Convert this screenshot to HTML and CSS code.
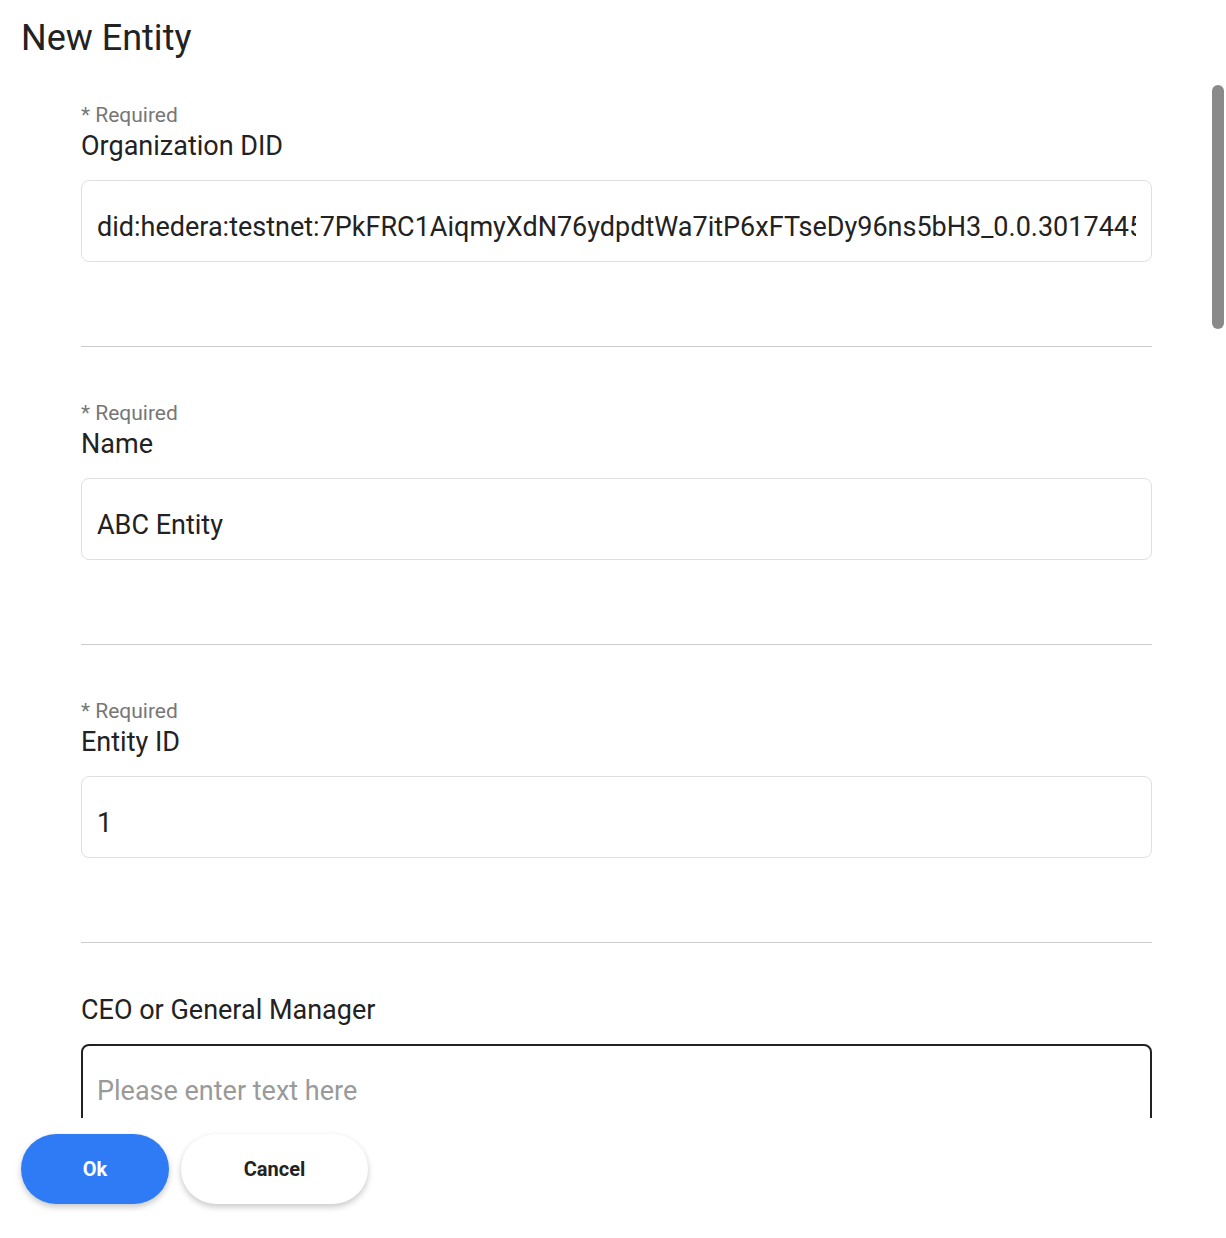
FILE: index.html
```html
<!DOCTYPE html>
<html lang="en">
<head>
<meta charset="utf-8">
<title>New Entity</title>
<link rel="stylesheet" href="styles.css">
</head>
<body>
<div class="dialog">
  <header class="dialog-header">
    <h1 class="dialog-title">New Entity</h1>
  </header>
  <div class="dialog-body">
    <form class="form">
      <div class="field">
        <div class="required">* Required</div>
        <label class="field-label">Organization DID</label>
        <input class="text-input" type="text" value="did:hedera:testnet:7PkFRC1AiqmyXdN76ydpdtWa7itP6xFTseDy96ns5bH3_0.0.3017445">
      </div>
      <div class="field">
        <div class="required">* Required</div>
        <label class="field-label">Name</label>
        <input class="text-input" type="text" value="ABC Entity">
      </div>
      <div class="field">
        <div class="required">* Required</div>
        <label class="field-label">Entity ID</label>
        <input class="text-input" type="text" value="1">
      </div>
      <div class="field field-optional">
        <label class="field-label">CEO or General Manager</label>
        <input class="text-input focused" type="text" placeholder="Please enter text here">
      </div>
    </form>
    <div class="scroll-thumb"></div>
  </div>
  <footer class="dialog-actions">
    <button class="btn btn-primary" type="button">Ok</button>
    <button class="btn btn-secondary" type="button">Cancel</button>
  </footer>
</div>
</body>
</html>
```
FILE: styles.css
```css
* { box-sizing: border-box; }

html, body {
  margin: 0;
  padding: 0;
  background: #ffffff;
}

body {
  font-family: Roboto, "Noto Sans", "Liberation Sans", sans-serif;
  color: #222222;
}

.dialog {
  width: 1226px;
  height: 1238px;
  display: flex;
  flex-direction: column;
}

.dialog-header {
  height: 85px;
  padding: 16px 0 0 21px;
  flex: none;
}

.dialog-title {
  margin: 0;
  font-size: 36px;
  line-height: 44px;
  font-weight: 400;
  color: #222222;
}

.dialog-body {
  position: relative;
  height: 1033px;
  flex: none;
  overflow: hidden;
}

.scroll-thumb {
  position: absolute;
  top: 0;
  right: 2px;
  width: 12px;
  height: 244px;
  background: #8a8a8a;
  border-radius: 6px;
}

.form {
  padding: 0 74px 0 81px;
  display: flex;
  flex-direction: column;
}

.field {
  padding: 16px 0 84px;
  border-bottom: 1px solid #cccccc;
  margin-bottom: 36px;
  display: flex;
  flex-direction: column;
}

.field-optional {
  padding-top: 14px;
}

.required {
  font-size: 21px;
  line-height: 28px;
  color: #777777;
}

.field-label {
  font-size: 27px;
  line-height: 28px;
  margin-top: 3px;
  color: #222222;
}

.text-input {
  margin-top: 20px;
  height: 82px;
  width: 100%;
  border: 1px solid #e0e0e0;
  border-radius: 8px;
  padding: 12px 15px 0 15px;
  font-family: Roboto, "Noto Sans", "Liberation Sans", sans-serif;
  font-size: 27px;
  color: #222222;
  background: #ffffff;
  outline: none;
}

.text-input::placeholder {
  color: #9a9a9a;
}

.text-input.focused {
  border: 2px solid #222222;
  padding: 11px 14px 0 14px;
}

.dialog-actions {
  flex: none;
  display: flex;
  gap: 12px;
  padding: 16px 0 0 21px;
}

.btn {
  height: 70px;
  border: none;
  border-radius: 35px;
  font-family: Roboto, "Noto Sans", "Liberation Sans", sans-serif;
  font-size: 20px;
  font-weight: 700;
  box-shadow: 0 3px 6px rgba(0, 0, 0, 0.22);
  cursor: pointer;
}

.btn-primary {
  width: 148px;
  background: #2f7bf5;
  color: #ffffff;
}

.btn-secondary {
  width: 187px;
  background: #ffffff;
  color: #222222;
}
```
